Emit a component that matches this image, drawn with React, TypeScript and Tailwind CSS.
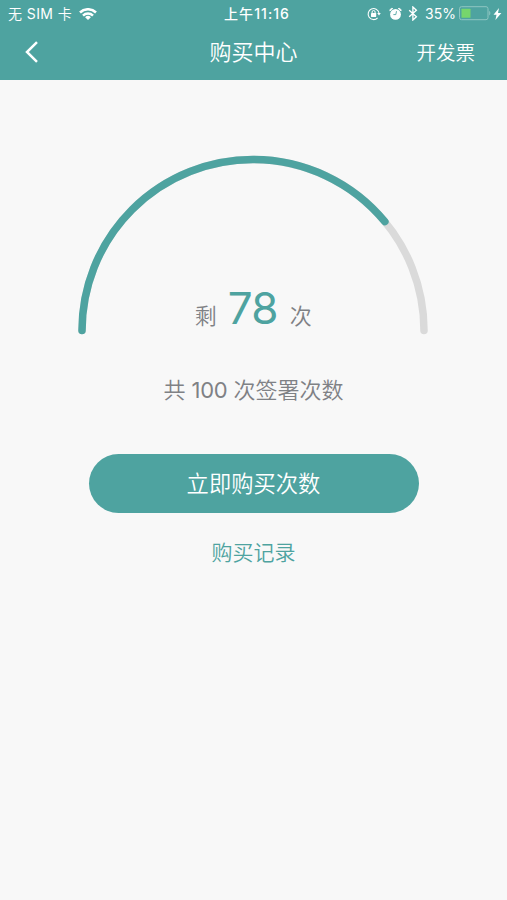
const USED = 78;
const TOTAL = 100;

function Wifi() {
  return (
    <svg className="ml-[7px] h-3 w-[18px]" viewBox="0 0 18 12" fill="none" stroke="white" strokeWidth="2.5">
      <path d="M1 4.5a11.4 11.4 0 0 1 16 0" />
      <path d="M4 7.6a7.1 7.1 0 0 1 10 0" />
      <path d="M9 12 6.1 9.2a4.1 4.1 0 0 1 5.8 0Z" fill="white" stroke="none" />
    </svg>
  );
}

function StatusIcons() {
  return (
    <>
      <svg className="h-[14px] w-[14px]" viewBox="0 0 14 14" fill="none" stroke="white">
        <path d="M10.6 10.9A5.5 5.5 0 1 1 12 5.9" strokeWidth="1.1" />
        <path d="M10.2 6h3.6L12 8.5Z" fill="white" stroke="none" />
        <rect x="4" y="6.1" width="5.2" height="3.8" rx=".4" fill="white" stroke="none" />
        <path d="M5.1 6.3V5a1.5 1.5 0 0 1 3 0v1.3" strokeWidth="1" />
      </svg>
      <svg className="ml-[8px] h-[14px] w-[13px]" viewBox="0 0 13 14" fill="none" stroke="white">
        <circle cx="6.5" cy="7.4" r="5.4" fill="white" stroke="none" />
        <path d="M.9 4A2.2 2.2 0 0 1 3.8 1.5ZM12.1 4A2.2 2.2 0 0 0 9.2 1.5Z" fill="white" strokeWidth=".8" />
        <path d="M7.5 4.2 6.8 7.6H4.4" stroke="#4ea3a0" strokeWidth=".9" />
      </svg>
      <svg className="ml-[6px] h-[15px] w-[10px]" viewBox="0 0 10 15" fill="none" stroke="white" strokeWidth="1.35">
        <path d="m1.2 4.2 7.2 6.5L4.9 14V1l3.5 3.3-7.2 6.5" />
      </svg>
    </>
  );
}

function Battery() {
  return (
    <>
      <svg className="ml-[3px] h-[15px] w-[32px]" viewBox="0 0 32 15" fill="none">
        <rect x=".5" y=".7" width="28.5" height="13" rx="2" stroke="#8fc6c2" />
        <rect x="2.5" y="2.7" width="9" height="9" rx=".5" fill="#76d66c" />
        <path d="M30.2 5v4.4c1.5-.5 1.5-3.9 0-4.4Z" fill="#8fc6c2" />
      </svg>
      <svg className="ml-[2px] h-[12px] w-[9px]" viewBox="0 0 9 12" fill="white">
        <path d="M6 0 .5 6.8h3L2.4 12l6-7.1H5Z" />
      </svg>
    </>
  );
}

function StatusBar() {
  return (
    <div className="grid h-[27px] grid-cols-[1fr_auto_1fr] items-center text-[14px] leading-none">
      <div className="flex items-center pl-[8px]">
        <span className="font-[350] tracking-[0.4px] whitespace-nowrap">
          无 <span className="font-normal">SIM</span> 卡
        </span>
        <Wifi />
      </div>
      <div className="pl-[7px] text-[14px] font-medium tracking-[1.05px] whitespace-nowrap">上午11:16</div>
      <div className="flex items-center justify-end pr-[5px]">
        <StatusIcons />
        <span className="ml-[7px]">35%</span>
        <Battery />
      </div>
    </div>
  );
}

function Gauge() {
  const length = Math.PI * 171;
  return (
    <div className="mr-[0.6px] grid h-[182px] w-[352px] justify-items-center">
      <svg className="col-start-1 row-start-1" width="352" height="182" viewBox="0 0 352 182" fill="none" strokeWidth="7.5" strokeLinecap="round">
        <path d="M5 176.5a171 171 0 0 1 342 0" stroke="#dadada" />
        <path d="M5 176.5a171 171 0 0 1 342 0" stroke="#4ea3a0" strokeDasharray={`${(length * USED) / TOTAL} ${length * 2}`} />
      </svg>
      <div className="col-start-1 row-start-1 flex items-baseline self-end pb-[6px] text-[22px] leading-none font-[350] text-[#7f8185]">
        <span>剩</span>
        <span className="mr-[12px] ml-[11px] text-[44px] font-normal tracking-[-0.7px] text-[#4ea3a0]">{USED}</span>
        <span>次</span>
      </div>
    </div>
  );
}

export default function App() {
  return (
    <div className="flex h-[900px] w-[507px] flex-col bg-[#f8f8f8] font-['Inter','Noto_Sans_CJK_SC',sans-serif]">
      <header className="h-20 bg-[#4ea3a0] text-white">
        <StatusBar />
        <nav className="grid h-[50px] grid-cols-[1fr_auto_1fr] items-center font-[350]">
          <button className="pl-[25px]" aria-label="返回">
            <svg width="14" height="22" viewBox="0 0 14 22" fill="none" stroke="white" strokeWidth="2.5">
              <path d="M12 1.2 2 11l10 9.8" />
            </svg>
          </button>
          <h1 className="text-[22px] leading-none font-[350]">购买中心</h1>
          <button className="justify-self-end pt-1 pr-[32px] text-[19.5px] leading-none">开发票</button>
        </nav>
      </header>

      <main className="flex flex-col items-center pt-[74px] font-[350]">
        <Gauge />
        <p className="mt-[43px] text-[22px] leading-[22px] text-[#7f8185]">
          共 <span className="font-normal tracking-[-0.3px]">{TOTAL}</span> 次签署次数
        </p>
        <button className="mt-[53px] h-[59px] w-[330px] rounded-full bg-[#4ea3a0] text-[22.3px] text-white">
          立即购买次数
        </button>
        <button className="mt-[29px] text-[21px] leading-[21px] text-[#4ea3a0]">购买记录</button>
      </main>
    </div>
  );
}
